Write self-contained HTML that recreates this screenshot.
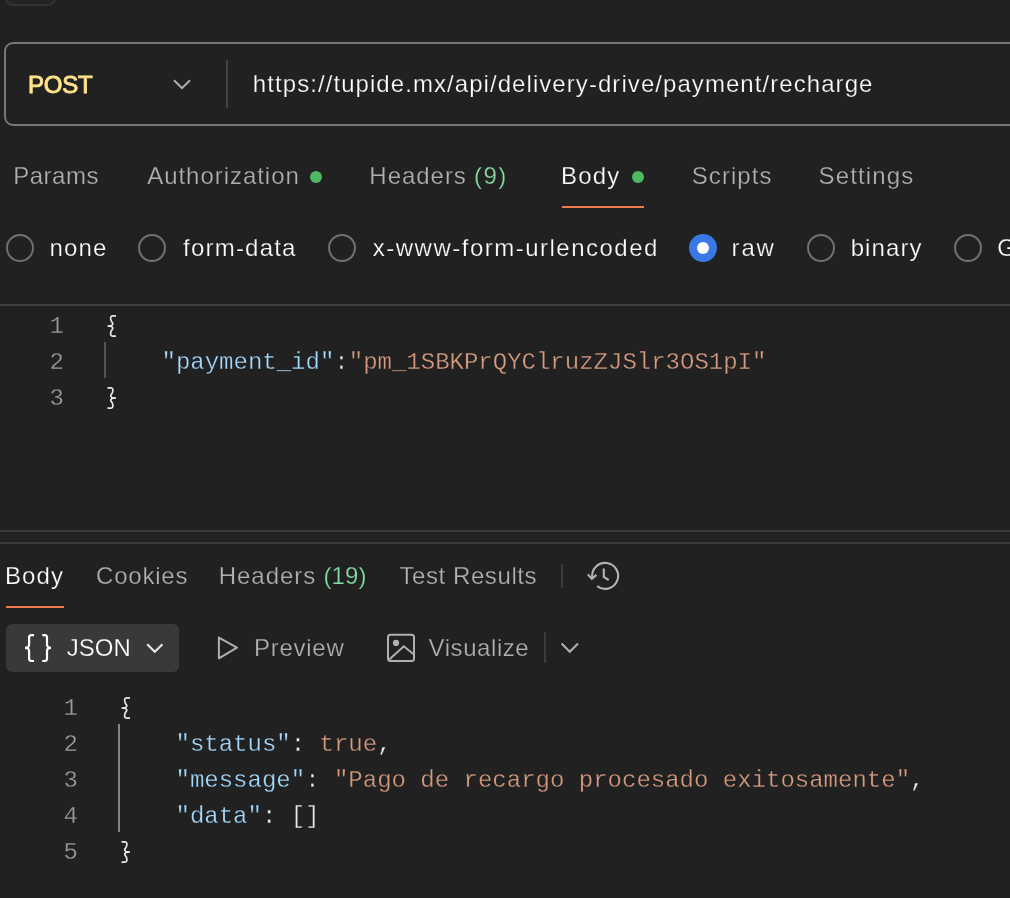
<!DOCTYPE html>
<html><head><meta charset="utf-8">
<style>
html,body{margin:0;padding:0;}
body{width:1010px;height:898px;overflow:hidden;background:#212121;position:relative;font-family:"Liberation Sans",sans-serif;}
.a{position:absolute;white-space:nowrap;}
.ui{font-size:24px;line-height:28px;color:#b0b0b0;-webkit-text-stroke:0.25px #212121;}
.onbtn{-webkit-text-stroke-color:#393939;}
.b{font-weight:normal;-webkit-text-stroke:0.9px #ffe48a;}
.post{color:#ffe48a;}
.w{color:#ffffff;}
.g{color:#84dca0;}
.mono{font-family:"Liberation Mono",monospace;font-size:24px;line-height:36px;-webkit-text-stroke:0.3px #212121;}
.ln{color:#9d9d95;}
.br{color:#e8e8e8;}
.key{color:#a4d8fc;}
.str{color:#d49a7e;}
.radio{position:absolute;width:24px;height:24px;border:2px solid #707070;border-radius:50%;}
.dot{position:absolute;width:12px;height:12px;border-radius:50%;background:#4eb862;}
.hl{position:absolute;left:0;width:1010px;height:2px;}
svg{position:absolute;overflow:visible;}
#r{position:absolute;left:0;top:0;width:1010px;height:898px;will-change:transform;}
</style></head>
<body><div id="r">
<!-- top partial box -->
<div class="a" style="left:5px;top:-24px;width:46.5px;height:26px;border:2px solid #333333;border-radius:8px;background:#242424;"></div>

<!-- URL bar -->
<div class="a" style="left:4px;top:42px;width:1100px;height:80px;border:2px solid #777777;border-radius:9px;"></div>
<svg style="left:160px;top:55px" width="80" height="60" viewBox="0 0 80 60"><path d="M14 25.2 L22 33.2 L30 25.2" fill="none" stroke="#b0b0b0" stroke-width="2"/></svg>
<div class="a" style="left:226px;top:60px;width:2px;height:48px;background:#444444;"></div>

<div class="a" style="left:6px;top:624px;width:173px;height:48px;background:#393939;border-radius:6px;"></div>
<div class="a ui b post" style="left:28.10px;top:71px;letter-spacing:-0.299px;">POST</div>
<div class="a ui w" style="left:252.87px;top:70px;letter-spacing:1.063px;">https://tupide.mx/api/delivery-drive/payment/recharge</div>
<div class="a ui" style="left:13.13px;top:162px;letter-spacing:0.529px;">Params</div>
<div class="a ui" style="left:147.19px;top:162px;letter-spacing:0.959px;">Authorization</div>
<div class="a ui" style="left:369.35px;top:162px;letter-spacing:0.966px;">Headers</div>
<div class="a ui g" style="left:473.94px;top:162px;letter-spacing:1.472px;">(9)</div>
<div class="a ui w" style="left:561.01px;top:162px;letter-spacing:1.193px;">Body</div>
<div class="a ui" style="left:691.75px;top:162px;letter-spacing:1.061px;">Scripts</div>
<div class="a ui" style="left:818.52px;top:162px;letter-spacing:1.154px;">Settings</div>
<div class="a ui w" style="left:49.44px;top:234px;letter-spacing:1.190px;">none</div>
<div class="a ui w" style="left:183.07px;top:234px;letter-spacing:1.211px;">form-data</div>
<div class="a ui w" style="left:372.83px;top:234px;letter-spacing:1.489px;">x-www-form-urlencoded</div>
<div class="a ui w" style="left:731.60px;top:234px;letter-spacing:1.811px;">raw</div>
<div class="a ui w" style="left:850.64px;top:234px;letter-spacing:1.097px;">binary</div>
<div class="a ui w" style="left:997.37px;top:234px;letter-spacing:0.900px;">GraphQL</div>
<div class="a ui w" style="left:4.96px;top:562px;letter-spacing:1.156px;">Body</div>
<div class="a ui" style="left:96.00px;top:562px;letter-spacing:0.793px;">Cookies</div>
<div class="a ui" style="left:218.77px;top:562px;letter-spacing:0.953px;">Headers</div>
<div class="a ui g" style="left:323.51px;top:562px;letter-spacing:0.124px;">(19)</div>
<div class="a ui" style="left:399.40px;top:562px;letter-spacing:0.588px;">Test Results</div>
<div class="a ui w onbtn" style="left:66.68px;top:634px;letter-spacing:0.061px;">JSON</div>
<div class="a ui" style="left:254.05px;top:634px;letter-spacing:0.724px;">Preview</div>
<div class="a ui" style="left:428.54px;top:634px;letter-spacing:0.572px;">Visualize</div>

<div class="dot" style="left:310px;top:170.5px;"></div>
<div class="dot" style="left:632px;top:170.5px;"></div>
<div class="a" style="left:562px;top:205.5px;width:82px;height:2.3px;background:#f07850;"></div>

<!-- body type radios -->
<div class="radio" style="left:6px;top:234px;"></div>
<div class="radio" style="left:138px;top:234px;"></div>
<div class="radio" style="left:328px;top:234px;"></div>
<div class="a" style="left:689px;top:234px;width:28px;height:28px;border-radius:50%;background:#3a78e6;"></div>
<div class="a" style="left:697px;top:242px;width:12px;height:12px;border-radius:50%;background:#ffffff;"></div>
<div class="radio" style="left:807px;top:234px;"></div>
<div class="radio" style="left:954px;top:234px;"></div>

<div class="hl" style="top:304px;background:#404040;"></div>

<!-- request editor -->
<div class="a mono ln" style="left:49.5px;top:309px;">1</div>
<div class="a mono ln" style="left:49.5px;top:345px;">2</div>
<div class="a mono ln" style="left:49.5px;top:381px;">3</div>
<svg style="left:100px;top:310px" width="30" height="30" viewBox="0 0 30 30"><path d="M16 5.8 H13 Q10.5 5.8 10.6 8.5 Q10.8 11 12.3 12.6 Q13.4 14.2 11.8 15.4 Q10.8 16 7.5 16 Q10.8 16 11.8 16.6 Q13.4 17.8 12.3 19.4 Q10.8 21 10.6 23.5 Q10.5 26.2 13 26.2 H16" fill="none" stroke="#e8e8e8" stroke-width="1.7"/></svg>
<div class="a" style="left:104px;top:342px;width:2px;height:36px;background:#55554f;"></div>
<div class="a mono" style="left:161.5px;top:345px;"><span class="key">"payment_id"</span><span class="br">:</span><span class="str">"pm_1SBKPrQYClruzZJSlr3OS1pI"</span></div>
<svg style="left:100px;top:382px" width="30" height="30" viewBox="0 0 30 30"><path d="M7.5 5.8 H10.5 Q13 5.8 12.9 8.5 Q12.7 11 11.2 12.6 Q10.1 14.2 11.7 15.4 Q12.7 16 16 16 Q12.7 16 11.7 16.6 Q10.1 17.8 11.2 19.4 Q12.7 21 12.9 23.5 Q13 26.2 10.5 26.2 H7.5" fill="none" stroke="#e8e8e8" stroke-width="1.7"/></svg>

<!-- divider -->
<div class="hl" style="top:530px;background:#3a3a3a;"></div>
<div class="hl" style="top:542px;background:#3a3a3a;"></div>

<!-- response tabs -->
<div class="a" style="left:6px;top:605.7px;width:58px;height:2.4px;background:#f07850;"></div>
<div class="a" style="left:560.5px;top:564px;width:2px;height:24px;background:#3c3c3c;"></div>
<svg style="left:582px;top:556px" width="44" height="40" viewBox="0 0 44 40"><path d="M10.2 21.5 A13 13 0 1 1 15.2 30.2" fill="none" stroke="#b4b4b4" stroke-width="2.1"/><path d="M5.8 18.6 L9.9 22.8 L14.4 18.9" fill="none" stroke="#b4b4b4" stroke-width="2.1"/><path d="M21.8 12.5 V21 L26.7 24" fill="none" stroke="#b4b4b4" stroke-width="2.1"/></svg>

<!-- response toolbar -->
<svg style="left:18px;top:628px" width="40" height="40" viewBox="0 0 40 40"><path d="M16 7.1 H13.6 Q11.1 7.1 11.1 9.6 V16.5 Q11.1 19.8 7 19.8 Q11.1 19.8 11.1 23.1 V30.5 Q11.1 33 13.6 33 H16" fill="none" stroke="#ffffff" stroke-width="2.2"/><path d="M24.3 7.1 H26.5 Q29 7.1 29 9.6 V16.5 Q29 19.8 33 19.8 Q29 19.8 29 23.1 V30.5 Q29 33 26.5 33 H24.3" fill="none" stroke="#ffffff" stroke-width="2.2"/></svg>
<svg style="left:140px;top:628px" width="30" height="40" viewBox="0 0 30 40"><path d="M7.2 16.2 L14.8 23.8 L22.4 16.2" fill="none" stroke="#e8e8e8" stroke-width="2.1"/></svg>
<svg style="left:208px;top:628px" width="40" height="40" viewBox="0 0 40 40"><path d="M10.9 9.6 L29 19.6 L10.9 30.3 Z" fill="none" stroke="#b0b0b0" stroke-width="2" stroke-linejoin="round"/></svg>
<svg style="left:382px;top:628px" width="40" height="40" viewBox="0 0 40 40"><rect x="6" y="6.8" width="26" height="26.3" rx="2.5" fill="none" stroke="#b0b0b0" stroke-width="2"/><circle cx="14" cy="14.9" r="3.1" fill="#b0b0b0"/><path d="M7.3 31.6 L21.8 18.3 L31.6 26.2" fill="none" stroke="#b0b0b0" stroke-width="2"/></svg>
<div class="a" style="left:544px;top:632px;width:2px;height:31px;background:#3c3c3c;"></div>
<svg style="left:556px;top:628px" width="30" height="40" viewBox="0 0 30 40"><path d="M5.6 15.6 L13.8 23.8 L22 15.6" fill="none" stroke="#b0b0b0" stroke-width="2.1"/></svg>

<!-- response editor -->
<div class="a mono ln" style="left:63.5px;top:691px;">1</div>
<div class="a mono ln" style="left:63.5px;top:727px;">2</div>
<div class="a mono ln" style="left:63.5px;top:763px;">3</div>
<div class="a mono ln" style="left:63.5px;top:799px;">4</div>
<div class="a mono ln" style="left:63.5px;top:835px;">5</div>
<svg style="left:114px;top:692px" width="30" height="30" viewBox="0 0 30 30"><path d="M16 5.8 H13 Q10.5 5.8 10.6 8.5 Q10.8 11 12.3 12.6 Q13.4 14.2 11.8 15.4 Q10.8 16 7.5 16 Q10.8 16 11.8 16.6 Q13.4 17.8 12.3 19.4 Q10.8 21 10.6 23.5 Q10.5 26.2 13 26.2 H16" fill="none" stroke="#e8e8e8" stroke-width="1.7"/></svg>
<div class="a" style="left:118px;top:724px;width:2px;height:108px;background:#86867f;"></div>
<div class="a mono" style="left:175.5px;top:727px;"><span class="key">"status"</span><span class="br">: </span><span class="str">true</span><span class="br">,</span></div>
<div class="a mono" style="left:175.5px;top:763px;"><span class="key">"message"</span><span class="br">: </span><span class="str">"Pago de recargo procesado exitosamente"</span><span class="br">,</span></div>
<div class="a mono" style="left:175.5px;top:799px;"><span class="key">"data"</span><span class="br">: []</span></div>
<svg style="left:114px;top:836px" width="30" height="30" viewBox="0 0 30 30"><path d="M7.5 5.8 H10.5 Q13 5.8 12.9 8.5 Q12.7 11 11.2 12.6 Q10.1 14.2 11.7 15.4 Q12.7 16 16 16 Q12.7 16 11.7 16.6 Q10.1 17.8 11.2 19.4 Q12.7 21 12.9 23.5 Q13 26.2 10.5 26.2 H7.5" fill="none" stroke="#e8e8e8" stroke-width="1.7"/></svg>
</div></body></html>
